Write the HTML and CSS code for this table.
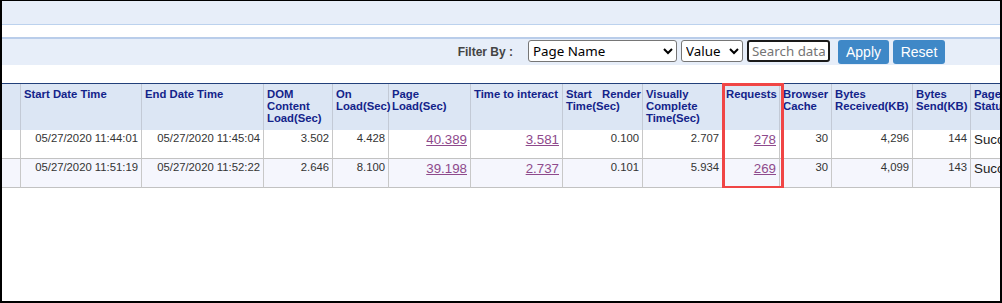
FILE: index.html
```html
<!DOCTYPE html>
<html>
<head>
<meta charset="utf-8">
<title>Page Load Report</title>
<link rel="stylesheet" href="styles.css">
</head>
<body>
<div class="frame">
  <div class="topbar"></div>
  <div class="toolbar">
    <span class="filter-label">Filter By :</span>
    <select class="sel sel-field"><option>Page Name</option></select>
    <select class="sel sel-op"><option>Value</option></select>
    <input class="search" type="text" placeholder="Search data">
    <button class="btn btn-apply">Apply</button>
    <button class="btn btn-reset">Reset</button>
  </div>
  <div class="grid-wrap">
    <table class="grid">
      <colgroup>
        <col class="w19"><col class="w121"><col class="w122"><col class="w69"><col class="w56"><col class="w82"><col class="w92"><col class="w80"><col class="w80"><col class="w57"><col class="w52"><col class="w81"><col class="w58"><col class="w60">
      </colgroup>
      <thead>
        <tr>
          <th></th>
          <th>Start Date Time</th>
          <th>End Date Time</th>
          <th>DOM Content Load(Sec)</th>
          <th>On Load(Sec)</th>
          <th>Page Load(Sec)</th>
          <th>Time to interact</th>
          <th>Start Render Time(Sec)</th>
          <th>Visually Complete Time(Sec)</th>
          <th>Requests</th>
          <th>Browser Cache</th>
          <th>Bytes Received(KB)</th>
          <th>Bytes Send(KB)</th>
          <th>Page Status</th>
        </tr>
      </thead>
      <tbody>
        <tr>
          <td></td>
          <td>05/27/2020 11:44:01</td>
          <td>05/27/2020 11:45:04</td>
          <td>3.502</td>
          <td>4.428</td>
          <td class="lk"><a href="#">40.389</a></td>
          <td class="lk"><a href="#">3.581</a></td>
          <td>0.100</td>
          <td>2.707</td>
          <td class="lk"><a href="#">278</a></td>
          <td>30</td>
          <td>4,296</td>
          <td>144</td>
          <td class="status">Success</td>
        </tr>
        <tr class="alt">
          <td></td>
          <td>05/27/2020 11:51:19</td>
          <td>05/27/2020 11:52:22</td>
          <td>2.646</td>
          <td>8.100</td>
          <td class="lk"><a href="#">39.198</a></td>
          <td class="lk"><a href="#">2.737</a></td>
          <td>0.101</td>
          <td>5.934</td>
          <td class="lk"><a href="#">269</a></td>
          <td>30</td>
          <td>4,099</td>
          <td>143</td>
          <td class="status">Success</td>
        </tr>
      </tbody>
    </table>
    <div class="highlight"></div>
  </div>
</div>
</body>
</html>
```
FILE: styles.css
```css
* { box-sizing: border-box; }
html, body { margin: 0; padding: 0; background: #fff; }

.frame {
  width: 1002px;
  height: 303px;
  border: 2px solid #000;
  border-top-width: 1px;
  overflow: hidden;
  font-family: "Liberation Sans", Arial, sans-serif;
  background: #fff;
}

.topbar {
  height: 24px;
  background: #e7eef9;
  border-bottom: 1px solid #bcd2ee;
}

.toolbar {
  margin-top: 12px;
  height: 28px;
  border-top: 2px solid #b9cdea;
  background: #e7eef9;
  display: flex;
  justify-content: flex-end;
  align-items: flex-start;
  padding: 1px 55px 0 0;
}

.filter-label {
  align-self: center;
  font-size: 12px;
  font-weight: bold;
  color: #444;
  margin-right: 15px;
  margin-top: -1px;
}

.sel {
  height: 22px;
  font-family: "Noto Sans", "Open Sans", sans-serif;
  font-size: 13.33px;
  color: #000;
  background: #fff;
  border: 1px solid #767676;
  border-radius: 3px;
  margin: 0 4px 0 0;
}
.sel-field { width: 149px; }
.sel-op { width: 62px; }

.search {
  width: 83px;
  height: 22px;
  border: 2px solid #1a1a1a;
  border-radius: 3px;
  padding: 0 3px;
  font-family: "Noto Sans", "Open Sans", sans-serif;
  font-size: 13.33px;
  margin: 0 8px 0 0;
  outline: none;
}
.search::placeholder { color: #757575; }

.btn {
  height: 24px;
  border: none;
  border-radius: 3px;
  background: #3f88c7;
  color: #fff;
  font-family: "Liberation Sans", Arial, sans-serif;
  font-size: 14px;
  padding: 0;
  margin: 0;
}
.btn-apply { width: 51px; margin-right: 4px; }
.btn-reset { width: 52px; }

.grid-wrap {
  position: relative;
  margin-top: 18px;
  width: 998px;
  overflow: hidden;
}

.grid {
  table-layout: fixed;
  width: 1029px;
  border-collapse: separate;
  border-spacing: 0;
  border-top: 1px solid #22407a;
}

.w19 { width: 19px; }
.w121 { width: 121px; }
.w122 { width: 122px; }
.w69 { width: 69px; }
.w56 { width: 56px; }
.w82 { width: 82px; }
.w92 { width: 92px; }
.w80 { width: 80px; }
.w57 { width: 57px; }
.w52 { width: 52px; }
.w81 { width: 81px; }
.w58 { width: 58px; }
.w60 { width: 60px; }

.grid th {
  height: 46px;
  padding: 4px 1px 0 3px;
  vertical-align: top;
  text-align: justify;
  font-size: 11.3px;
  line-height: 12px;
  font-weight: bold;
  color: #13238a;
  background: #dce6f4;
  border-right: 1px solid #c3cad6;
}

.grid td {
  height: 29px;
  padding: 2px 3px 0 3px;
  vertical-align: top;
  text-align: right;
  font-size: 11.3px;
  line-height: 13px;
  color: #333;
  background: #fff;
  border-right: 1px solid #c8c8c8;
  border-bottom: 1px solid #c2c2c2;
  white-space: nowrap;
  overflow: visible;
}
.grid tr.alt td { background: #f5f6fd; }

.grid td.lk {
  font-size: 13.33px;
  line-height: 15px;
}
.grid td.lk a {
  color: #8e4a8c;
  text-decoration: underline;
}
.grid td.status {
  text-align: left;
  font-size: 13.33px;
  line-height: 15px;
  color: #222;
}

.highlight {
  position: absolute;
  left: 720px;
  top: 0;
  width: 62px;
  height: 106px;
  border: 3px solid #f04545;
  pointer-events: none;
}
```
